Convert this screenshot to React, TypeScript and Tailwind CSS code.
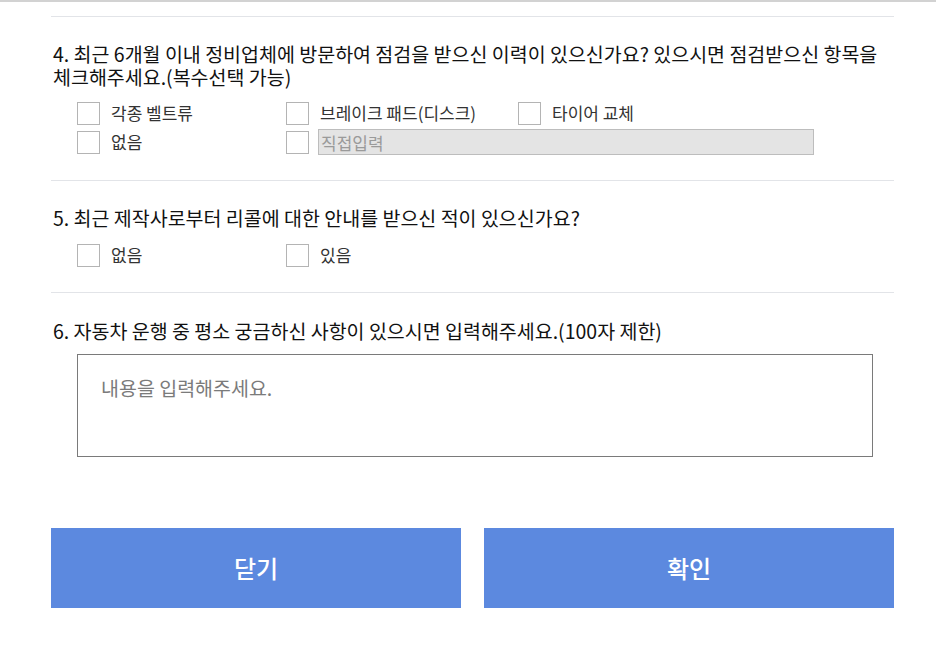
import React from "react";

const FONT = { fontFamily: '"Noto Sans CJK KR", "Noto Sans", sans-serif' };

function Check({ label, width }: { label: string; width?: string }) {
  return (
    <label className={`flex items-center gap-[11px] ${width ?? ""}`}>
      <span className="w-[23px] h-[23px] border border-[#b4b4b4] bg-white shrink-0" />
      <span className="text-[17px] text-[#333] leading-[23px] -mt-[2px]">{label}</span>
    </label>
  );
}

export default function App() {
  return (
    <div style={FONT} className="w-[936px] h-[652px] bg-white border-t-2 border-[#d2d2d2] overflow-hidden">
      <div className="px-[51px] pr-[42px]">
        <div className="mt-[14px] border-t border-[#e2e4e8]" />

        {/* Q4 */}
        <div className="pt-[25px] pb-[25px] border-b border-[#e2e4e8]">
          <p className="text-[19.5px] leading-[23px] text-[#111] pl-[2px]">
            4. 최근 6개월 이내 정비업체에 방문하여 점검을 받으신 이력이 있으신가요? 있으시면 점검받으신 항목을 체크해주세요.(복수선택 가능)
          </p>
          <div className="mt-[14px] pl-[26px] flex flex-col gap-[4px]">
            <div className="flex items-center h-[23px]">
              <Check label="각종 벨트류" width="w-[209px]" />
              <Check label="브레이크 패드(디스크)" width="w-[232px]" />
              <Check label="타이어 교체" />
            </div>
            <div className="flex items-center h-[26px]">
              <Check label="없음" width="w-[209px]" />
              <div className="flex items-center gap-[9px]">
                <span className="w-[23px] h-[23px] border border-[#b4b4b4] bg-white shrink-0" />
                <input
                  disabled
                  placeholder="직접입력"
                  className="w-[496px] h-[26px] bg-[#e4e4e4] border border-[#bdbdbd] px-[2px] text-[17px] placeholder:text-[#9a9a9a] outline-none"
                  style={FONT}
                />
              </div>
            </div>
          </div>
        </div>

        {/* Q5 */}
        <div className="pt-[25px] pb-[25px] border-b border-[#e2e4e8]">
          <p className="text-[19.5px] leading-[23px] text-[#111] pl-[2px]">
            5. 최근 제작사로부터 리콜에 대한 안내를 받으신 적이 있으신가요?
          </p>
          <div className="mt-[15px] pl-[26px] flex items-center h-[23px]">
            <Check label="없음" width="w-[209px]" />
            <Check label="있음" />
          </div>
        </div>

        {/* Q6 */}
        <div className="pt-[26px]">
          <p className="text-[19.5px] leading-[23px] text-[#111] pl-[2px]">
            6. 자동차 운행 중 평소 궁금하신 사항이 있으시면 입력해주세요.(100자 제한)
          </p>
          <div className="mt-[12px] pl-[26px]">
            <textarea
              placeholder="내용을 입력해주세요."
              className="block w-[796px] h-[103px] border border-[#7a7a7a] px-[23px] py-[20px] text-[19.5px] leading-[26px] resize-none outline-none placeholder:text-[#7b7b7b]"
              style={FONT}
            />
          </div>
        </div>

        {/* Buttons */}
        <div className="mt-[71px] flex gap-[23px]">
          <button className="w-[410px] h-[80px] bg-[#5c89df] text-white text-[24px] font-medium" style={FONT}>
            닫기
          </button>
          <button className="w-[410px] h-[80px] bg-[#5c89df] text-white text-[24px] font-medium" style={FONT}>
            확인
          </button>
        </div>
      </div>
    </div>
  );
}
